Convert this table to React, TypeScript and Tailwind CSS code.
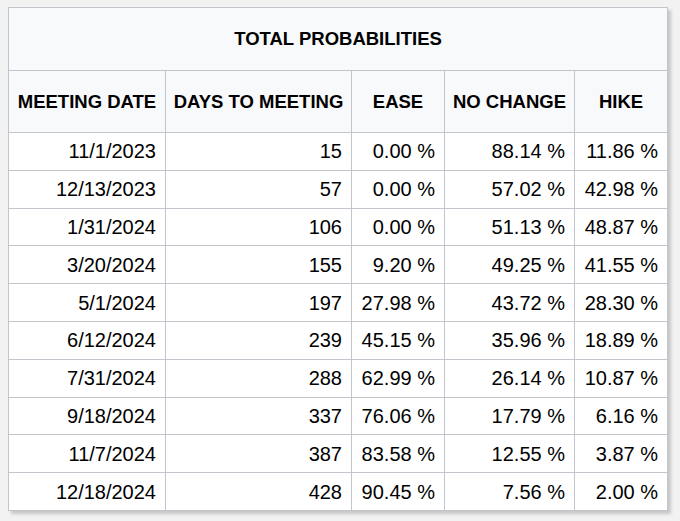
const rows: [string, string, string, string, string][] = [
  ['11/1/2023', '15', '0.00 %', '88.14 %', '11.86 %'],
  ['12/13/2023', '57', '0.00 %', '57.02 %', '42.98 %'],
  ['1/31/2024', '106', '0.00 %', '51.13 %', '48.87 %'],
  ['3/20/2024', '155', '9.20 %', '49.25 %', '41.55 %'],
  ['5/1/2024', '197', '27.98 %', '43.72 %', '28.30 %'],
  ['6/12/2024', '239', '45.15 %', '35.96 %', '18.89 %'],
  ['7/31/2024', '288', '62.99 %', '26.14 %', '10.87 %'],
  ['9/18/2024', '337', '76.06 %', '17.79 %', '6.16 %'],
  ['11/7/2024', '387', '83.58 %', '12.55 %', '3.87 %'],
  ['12/18/2024', '428', '90.45 %', '7.56 %', '2.00 %'],
];

const headers = ['MEETING DATE', 'DAYS TO MEETING', 'EASE', 'NO CHANGE', 'HIKE'];

export default function App() {
  return (
    <div
      className="min-h-[521px] bg-[#f2f2f2] pt-[7px] pl-[8px]"
      style={{fontFamily: '"Liberation Sans", Arial, sans-serif'}}
    >
      <table className="w-[659px] table-fixed border-collapse border border-[#c2c6cc] bg-white text-black shadow-[3px_3px_3px_rgba(0,0,0,0.18)]">
        <colgroup>
          <col className="w-[157px]" />
          <col className="w-[186px]" />
          <col className="w-[93px]" />
          <col className="w-[130px]" />
          <col className="w-[93px]" />
        </colgroup>
        <thead>
          {/* title row */}
          <tr className="h-[63px] bg-[#f8f9fa]">
            <th colSpan={5} className="border border-[#c2c6cc] text-center text-[18.5px] font-bold">
              TOTAL PROBABILITIES
            </th>
          </tr>
          {/* column headers */}
          <tr className="h-[62px] bg-[#f8f9fa]">
            {headers.map(h => (
              <th
                key={h}
                className="border border-[#c2c6cc] px-1 text-center text-[18.5px] font-bold whitespace-nowrap"
              >
                {h}
              </th>
            ))}
          </tr>
        </thead>
        <tbody>
          {rows.map(r => (
            <tr key={r[0]} className="h-[37.8px]">
              {r.map((cell, i) => (
                <td
                  key={i}
                  className="border border-[#c2c6cc] pr-[9px] pl-1 text-right text-[20px] leading-none whitespace-nowrap"
                >
                  {cell}
                </td>
              ))}
            </tr>
          ))}
        </tbody>
      </table>
    </div>
  );
}
